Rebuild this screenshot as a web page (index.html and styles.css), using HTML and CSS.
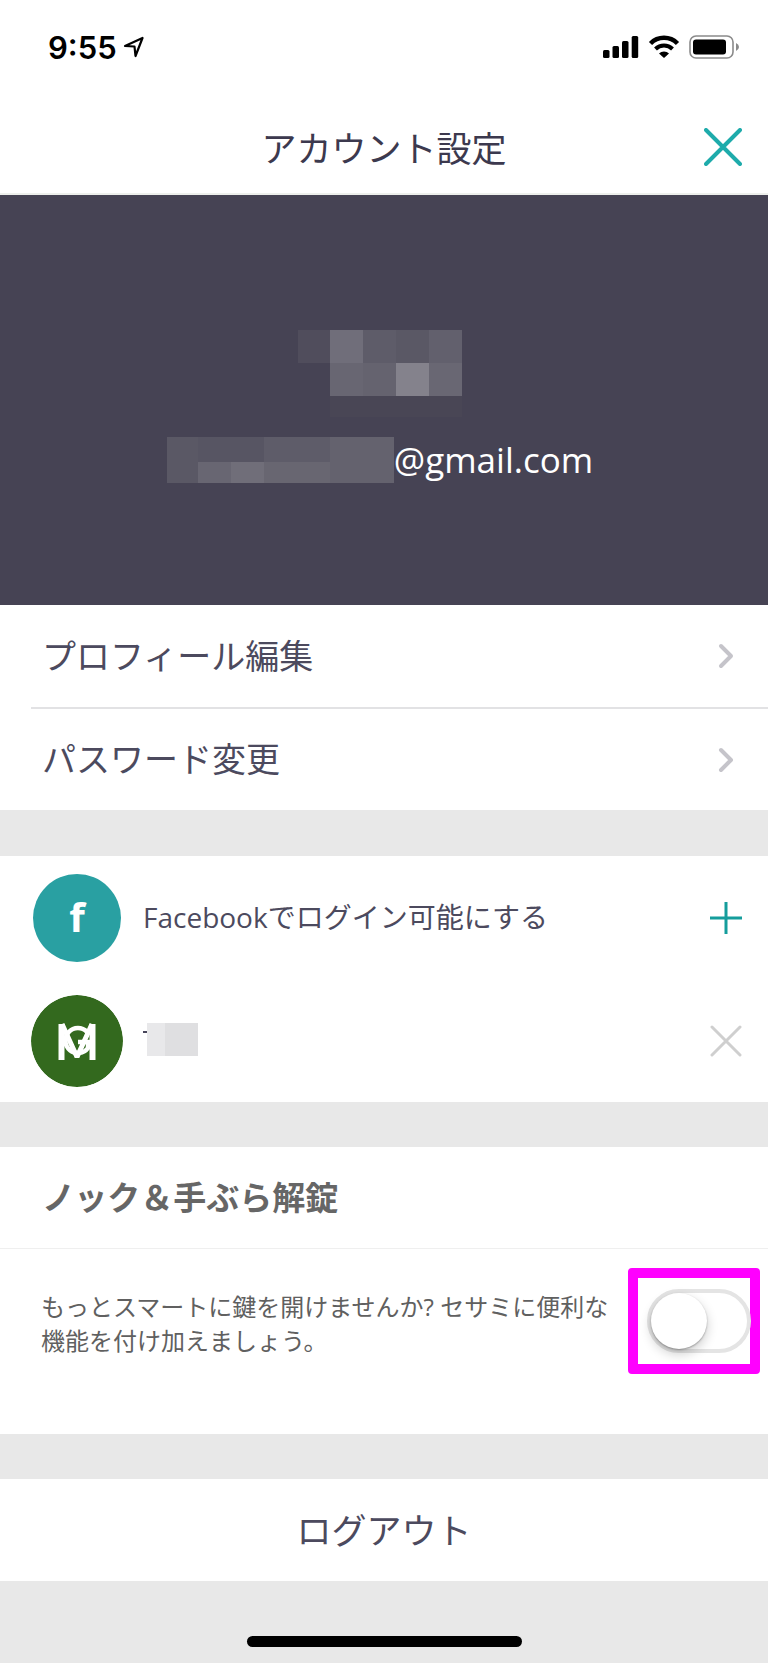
FILE: index.html
```html
<!DOCTYPE html>
<html lang="ja">

<head>
  <meta charset="UTF-8" />
  <meta name="viewport" content="width=device-width, initial-scale=1.0">
  <title>アカウント設定</title>
  <link rel="stylesheet" href="styles.css">
</head>

<body>
  <div class="status-bar">
    <div class="status-left">
      <span class="time">9:55</span>
      <svg class="location" width="22" height="22" viewBox="0 0 22 22">
        <path d="M2 10 L19.500 2 L12.500 20 L11.500 10.500 Z" fill="none" stroke="#000" stroke-width="2.200" stroke-linejoin="round" />
      </svg>
    </div>
    <div class="status-right">
      <svg width="36" height="24" viewBox="0 0 36 24">
        <rect x="0" y="15" width="6.500" height="8" rx="1.500" />
        <rect x="9.500" y="11" width="6.500" height="12" rx="1.500" />
        <rect x="19" y="6" width="6.500" height="17" rx="1.500" />
        <rect x="28.700" y="1" width="6.500" height="22" rx="1.500" />
      </svg>
      <svg width="32" height="24" viewBox="0 0 32 24">
        <path d="M2.500 8.500 A19 19 0 0 1 29.500 8.500" fill="none" stroke="#000" stroke-width="4.500" />
        <path d="M7.500 14 A12 12 0 0 1 24.500 14" fill="none" stroke="#000" stroke-width="4" />
        <path d="M11 18.500 A7 7 0 0 1 21 18.500 L16 23 Z" />
      </svg>
      <svg width="51" height="24" viewBox="0 0 51 24">
        <rect x="1" y="1" width="43" height="22" rx="6" fill="none" stroke="#8a8a8a" stroke-width="1.600" />
        <rect x="4" y="4.500" width="33" height="15" rx="3" />
        <path d="M47 8 Q50 9.500 50 12 Q50 14.500 47 16 Z" fill="#8a8a8a" />
      </svg>
    </div>
  </div>

  <header class="header">
    <h1>アカウント設定</h1>
    <button type="button" class="icon-btn close" aria-label="閉じる">
      <svg width="38" height="38" viewBox="0 0 38 38">
        <path d="M2 2 L36 36 M36 2 L2 36" stroke="#1eabab" stroke-width="4" stroke-linecap="round" />
      </svg>
    </button>
  </header>

  <section class="profile">
    <svg class="masked-name" width="164" height="88" viewBox="0 0 164 88">
      <rect x="0" y="0" width="32" height="33" fill="#504d5c" />
      <rect x="32" y="0" width="33" height="33" fill="#706e7a" />
      <rect x="65" y="0" width="33" height="33" fill="#5e5c69" />
      <rect x="98" y="0" width="33" height="33" fill="#5a5865" />
      <rect x="131" y="0" width="33" height="33" fill="#62606d" />
      <rect x="32" y="33" width="33" height="33" fill="#686672" />
      <rect x="65" y="33" width="33" height="33" fill="#65636f" />
      <rect x="98" y="33" width="33" height="33" fill="#84828c" />
      <rect x="131" y="33" width="33" height="33" fill="#696773" />
      <rect x="32" y="66" width="132" height="21" fill="#494655" />
    </svg>
    <p class="email">
      <svg width="227" height="46" viewBox="0 0 227 46">
        <rect x="0" y="0" width="97" height="46" fill="#5a5865" />
        <rect x="31" y="0" width="66" height="25" fill="#575563" />
        <rect x="97" y="0" width="66" height="25" fill="#5e5c69" />
        <rect x="163" y="0" width="64" height="46" fill="#64626e" />
        <rect x="31" y="25" width="33" height="21" fill="#686672" />
        <rect x="64" y="25" width="33" height="21" fill="#706e79" />
        <rect x="97" y="25" width="66" height="21" fill="#686671" />
      </svg>
      <span>@gmail.com</span>
    </p>
  </section>

  <nav class="menu">
    <a href="#">
      <span>プロフィール編集</span>
      <svg width="16" height="26" viewBox="0 0 16 26">
        <path d="M3 3 L13 13 L3 23" fill="none" stroke="#c5c4ca" stroke-width="4" stroke-linecap="round" stroke-linejoin="round" />
      </svg>
    </a>
    <a href="#">
      <span>パスワード変更</span>
      <svg width="16" height="26" viewBox="0 0 16 26">
        <path d="M3 3 L13 13 L3 23" fill="none" stroke="#c5c4ca" stroke-width="4" stroke-linecap="round" stroke-linejoin="round" />
      </svg>
    </a>
  </nav>

  <section class="accounts">
    <div class="account">
      <span class="badge"><span class="avatar facebook">f</span></span>
      <span class="account-name">Facebookでログイン可能にする</span>
      <button type="button" class="icon-btn" aria-label="追加">
        <svg width="32" height="32" viewBox="0 0 32 32">
          <path d="M16 0 V32 M0 16 H32" stroke="#159d9c" stroke-width="3" />
        </svg>
      </button>
    </div>
    <div class="account">
      <span class="badge">
        <!-- monogram logo -->
        <svg class="avatar" width="92" height="92" viewBox="0 0 92 92">
          <circle cx="46" cy="46" r="46" fill="#33691e" />
          <g fill="none" stroke="#fff" stroke-width="6">
            <path d="M30.500 65 V29 M61.500 65 V29" />
            <path d="M31 29 L46 62 L61 29" stroke-width="5" stroke-linejoin="bevel" />
            <path d="M56 37 A12.500 12.500 0 1 0 57 53 V47 H47" stroke-width="4.500" />
          </g>
        </svg>
      </span>
      <span class="account-name">
        <svg width="55" height="33" viewBox="0 0 55 33">
          <rect x="0" y="8" width="4" height="2" fill="#47455a" />
          <rect x="4" y="0" width="18" height="33" fill="#e8e8ea" />
          <rect x="22" y="0" width="33" height="33" fill="#dfdfe1" />
        </svg>
      </span>
      <button type="button" class="icon-btn" aria-label="解除">
        <svg width="32" height="32" viewBox="0 0 32 32">
          <path d="M2 2 L30 30 M30 2 L2 30" stroke="#cfcfcf" stroke-width="3" stroke-linecap="round" />
        </svg>
      </button>
    </div>
  </section>

  <section class="knock">
    <h2>ノック＆手ぶら解錠</h2>
    <div class="knock-body">
      <label for="knock">もっとスマートに鍵を開けませんか? セサミに便利な機能を付け加えましょう。</label>
      <div class="highlight">
        <input type="checkbox" id="knock" class="switch" />
      </div>
    </div>
  </section>

  <button type="button" class="logout">ログアウト</button>

  <div class="home-bar"></div>
</body>

</html>
```

FILE: styles.css
```css
* {
  box-sizing: border-box;
  margin: 0;
  padding: 0;
}

body {
  font-family: 'Open Sans', 'Noto Sans CJK JP', sans-serif;
  font-weight: 400;
  background: #e8e8e8;
  color: #4c4a5e;
}

svg {
  display: block;
  flex-shrink: 0;
}

button {
  font: inherit;
  color: inherit;
  background: none;
  border: none;
  cursor: pointer;
}

.status-bar {
  display: flex;
  justify-content: space-between;
  align-items: center;
  height: 94px;
  padding: 0 28px 0 48px;
  background: #fff;
}

.status-left,
.status-right {
  display: flex;
  align-items: center;
}

.status-left {
  gap: 6px;
}

.status-right {
  gap: 9px;
}

.time {
  font-family: 'Inter', sans-serif;
  font-size: 31px;
  font-weight: 600;
  color: #000;
}

.header {
  display: grid;
  grid-template-columns: 1fr auto 1fr;
  align-items: center;
  height: 101px;
  padding: 6px 26px 0;
  background: #fff;
  border-bottom: 2px solid #eef0ec;
}

.header h1 {
  grid-column: 2;
  font-size: 35px;
  font-weight: 400;
  color: #3c394e;
}

.close {
  justify-self: end;
}

.profile {
  display: flex;
  flex-direction: column;
  align-items: center;
  gap: 19px;
  height: 410px;
  padding-top: 135px;
  background: #464354;
}

.masked-name {
  margin-right: 8px;
}

.email {
  display: flex;
  align-items: center;
  margin-right: 8px;
  font-size: 35px;
  line-height: 46px;
  color: #fff;
}

.menu {
  background: #fff;
}

.menu a {
  display: flex;
  justify-content: space-between;
  align-items: center;
  height: 102px;
  margin-left: 31px;
  padding: 0 34px 0 11px;
  font-size: 34px;
  color: #4c4a5e;
  text-decoration: none;
}

.menu a + a {
  height: 103px;
  border-top: 2px solid #e2e2e4;
}

.menu span,
.logout {
  padding-bottom: 4px;
}

.accounts {
  margin-top: 46px;
  height: 246px;
  background: #fff;
}

.account {
  display: flex;
  align-items: center;
  height: 123px;
  padding: 0 26px 0 31px;
}

.badge {
  display: flex;
  justify-content: center;
  width: 92px;
  margin-right: 20px;
}

.avatar {
  border-radius: 50%;
}

.facebook {
  width: 88px;
  height: 88px;
  background: #29a0a2;
  color: #fff;
  font-size: 40px;
  font-weight: 700;
  line-height: 86px;
  text-align: center;
}

.account-name {
  flex: 1;
  padding-bottom: 3px;
  font-size: 28px;
}

.icon-btn {
  display: flex;
}

.knock {
  margin-top: 45px;
  background: #fff;
}

.knock h2 {
  height: 102px;
  padding-left: 42px;
  border-bottom: 1px solid #efefef;
  font-size: 33px;
  font-weight: 700;
  line-height: 102px;
  color: #666;
}

.knock-body {
  display: flex;
  align-items: flex-start;
  justify-content: space-between;
  height: 185px;
  padding: 19px 8px 0 41px;
}

.knock-body label {
  flex: 1;
  padding-top: 22px;
  font-size: 24px;
  line-height: 34px;
  color: #606060;
}

.highlight {
  display: flex;
  align-items: center;
  width: 132px;
  height: 106px;
  padding-left: 9px;
  border: 10px solid #f0f;
  border-radius: 4px;
}

.switch {
  appearance: none;
  flex-shrink: 0;
  width: 104px;
  height: 64px;
  border: 4px solid #e4e4e4;
  border-radius: 32px;
  background: #fff;
}

.switch::before {
  content: '';
  display: block;
  width: 56px;
  height: 56px;
  border-radius: 50%;
  background: #fff;
  box-shadow: 0 1px 2px rgba(0, 0, 0, 0.3), 0 5px 12px rgba(0, 0, 0, 0.2);
}

.switch:checked::before {
  margin-left: 40px;
}

.logout {
  display: block;
  width: 100%;
  height: 102px;
  margin-top: 45px;
  background: #fff;
  font-size: 35px;
}

.home-bar {
  width: 275px;
  height: 11px;
  margin: 55px auto 16px;
  border-radius: 6px;
  background: #000;
}
```
